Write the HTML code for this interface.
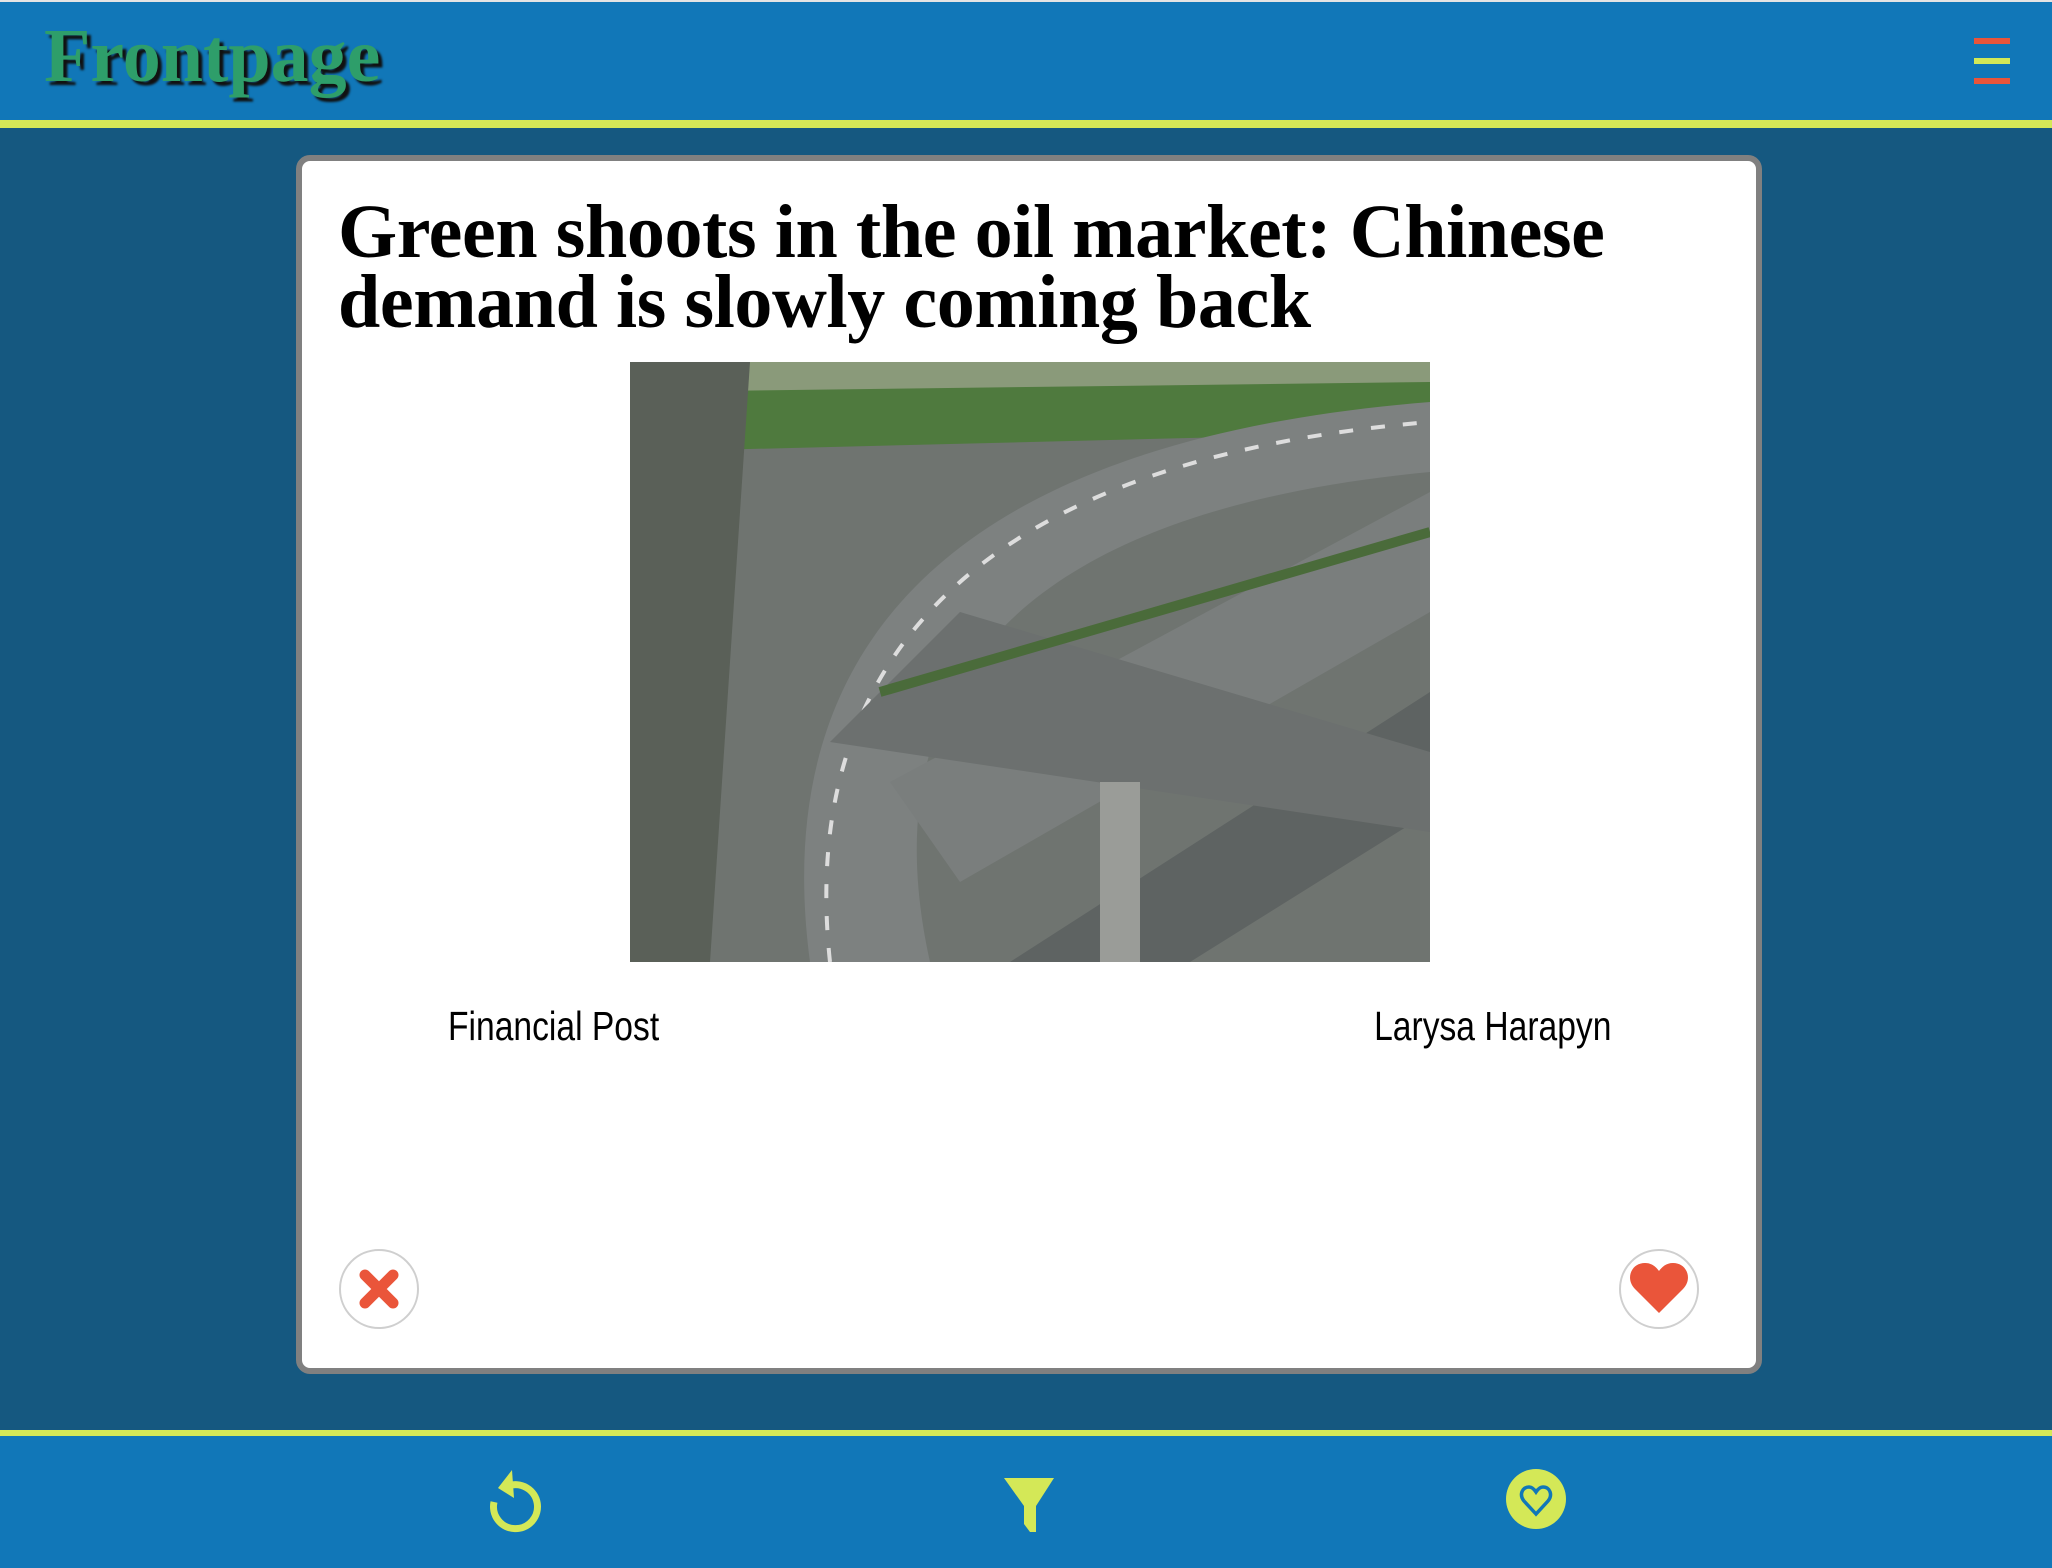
<!DOCTYPE html>
<html><head><meta charset="utf-8"><style>
*{margin:0;padding:0;box-sizing:border-box}
html,body{width:2052px;height:1568px;overflow:hidden;background:#155880;font-family:"Liberation Sans",sans-serif}
.top{position:absolute;left:0;top:0;width:2052px;height:120px;background:#1177b8;border-top:2px solid #e4e4e4}
.tl{position:absolute;left:0;top:120px;width:2052px;height:8px;background:#d4e857}
.logo{position:absolute;left:44px;top:13px;font-family:"Liberation Serif",serif;font-weight:bold;font-size:76px;color:#2e9e6a;text-shadow:4px 4px 2px #111;letter-spacing:0px}
.hb{position:absolute;left:1974px;width:36px;height:6px}
.card{position:absolute;left:296px;top:155px;width:1466px;height:1219px;background:#fff;border:6px solid #808080;border-radius:14px}
.title{position:absolute;left:36px;top:36px;width:1400px;font-family:"Liberation Serif",serif;font-weight:bold;font-size:76px;line-height:70px;letter-spacing:-0.4px;color:#000}
.src{position:absolute;top:842px;font-family:"Liberation Sans Narrow","Liberation Sans",sans-serif;font-size:41px;color:#000;transform:scaleX(0.82)}
.btn{position:absolute;width:80px;height:80px;border-radius:50%;border:2px solid #cfcfcf;background:#fff;top:1088px}
.bl{position:absolute;left:0;top:1430px;width:2052px;height:6px;background:#d4e857}
.bot{position:absolute;left:0;top:1436px;width:2052px;height:132px;background:#1177b8}
</style></head><body>
<div class="top"></div>
<div class="logo">Frontpage</div>
<div class="hb" style="top:38px;background:#ea553a"></div>
<div class="hb" style="top:58px;background:#d4e857"></div>
<div class="hb" style="top:78px;background:#ea553a"></div>
<div class="tl"></div>
<div class="card">
<div class="title">Green shoots in the oil market: Chinese<br>demand is slowly coming back</div>
<svg style="position:absolute;left:328px;top:201px" width="800" height="600" viewBox="0 0 800 600">
<rect width="800" height="600" fill="#6f7470"/>
<rect width="800" height="60" fill="#8a9a7a"/>
<path d="M0 30 L800 20 L800 70 L0 90Z" fill="#4f7a3e"/>
<path d="M0 0 L120 0 L80 600 L0 600Z" fill="#5a6058"/>
<path d="M180 600 C 140 300 300 80 800 40 L800 110 C 380 150 240 330 300 600Z" fill="#7d8180"/>
<path d="M200 600 C 170 320 320 100 800 60" stroke="#ddd" stroke-width="4" fill="none" stroke-dasharray="14 18"/>
<path d="M260 420 L800 130 L800 250 L330 520Z" fill="#7a7e7d"/>
<path d="M380 600 L800 330 L800 450 L560 600Z" fill="#5e6362"/>
<path d="M200 380 L330 250 L800 390 L800 470Z" fill="#6c706f"/>
<path d="M250 330 L800 170" stroke="#4a6b3a" stroke-width="10"/>
<rect x="470" y="420" width="40" height="180" fill="#9a9c98"/>
</svg>
<div class="src" style="left:146px;transform-origin:left center">Financial Post</div>
<div class="src" style="right:145px;transform-origin:right center">Larysa Harapyn</div>
<div class="btn" style="left:37px"><svg width="76" height="76" viewBox="0 0 76 76"><path d="M24 24 L52 52 M52 24 L24 52" stroke="#ea553a" stroke-width="11" stroke-linecap="round"/></svg></div>
<div class="btn" style="left:1317px"><svg width="76" height="76" viewBox="0 0 76 76"><path d="M38 62 L14 38 C4 28 10 12 24 12 C31 12 35 16 38 20 C41 16 45 12 52 12 C66 12 72 28 62 38 Z" fill="#ea553a"/></svg></div>
</div>
<div class="bl"></div>
<div class="bot"></div>
<svg style="position:absolute;left:486px;top:1468px" width="60" height="66" viewBox="0 0 60 66"><path d="M22 18 A22 22 0 1 1 8 34" fill="none" stroke="#d4e857" stroke-width="7"/><path d="M26 2 L12 20 L28 30Z" fill="#d4e857"/></svg>
<svg style="position:absolute;left:1002px;top:1476px" width="56" height="56" viewBox="0 0 56 56"><path d="M2 2 L52 2 L34 30 L22 30Z" fill="#d4e857"/><path d="M22 28 L34 28 L34 56 L28 56 L22 48Z" fill="#d4e857"/></svg>
<svg style="position:absolute;left:1505px;top:1468px" width="62" height="62" viewBox="0 0 62 62"><circle cx="31" cy="31" r="30" fill="#d4e857"/><path d="M31 46 L19 33 C14 27 17 19 24 19 C27 19 29 21 31 24 C33 21 35 19 38 19 C45 19 48 27 43 33 Z" fill="none" stroke="#1177b8" stroke-width="3.5"/></svg>
</body></html>
